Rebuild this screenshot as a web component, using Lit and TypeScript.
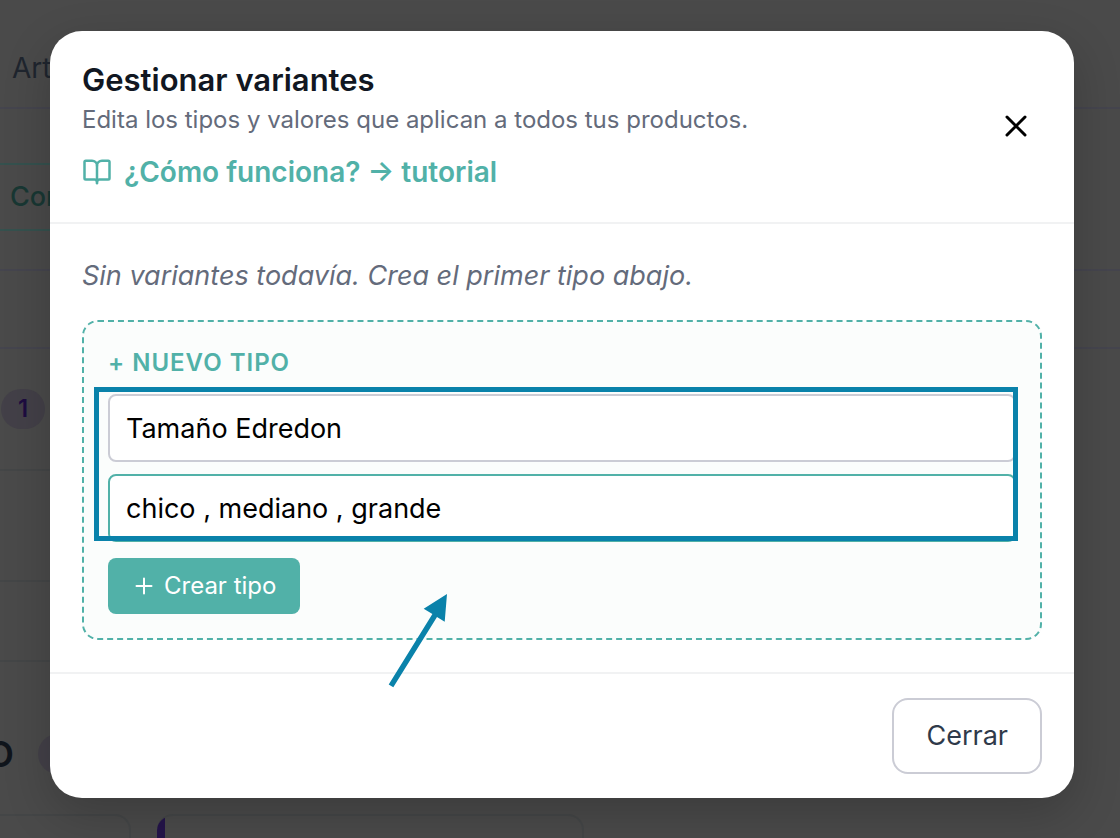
import { LitElement, html, css } from "lit";
import { customElement, state } from "lit/decorators.js";

@customElement("catalog-backdrop")
class CatalogBackdrop extends LitElement {
  static styles = css`
    :host {
      display: block;
      height: 100vh;
      overflow: hidden;
      background: #4a4a4a;
      color: #1f252e;
      font-family: Inter, "Liberation Sans", sans-serif;
      white-space: nowrap;
    }
    * { box-sizing: border-box; }
    .bar {
      height: 109px;
      padding: 48px 12px 0;
      border-bottom: 2px solid #45454e;
      font-size: 28px;
      line-height: 40px;
    }
    .filters {
      height: 162px;
      padding-top: 54px;
      border-bottom: 2px solid #45454e;
    }
    .filter {
      width: 240px;
      height: 68px;
      padding: 12px 10px;
      border: 2px solid #35514e;
      border-left: 0;
      color: #183733;
      font-size: 27px;
      font-weight: 500;
      line-height: 40px;
    }
    .head { height: 78px; border-bottom: 2px solid #45454e; }
    .row {
      width: 960px;
      height: 111px;
      border-bottom: 2px solid #444647;
    }
    .row.first { height: 122px; padding: 40px 1px; }
    .row.last { height: 80px; }
    .pill {
      display: block;
      width: 44px;
      height: 40px;
      border-radius: 20px;
      background: #434048;
      color: #1d0c40;
      font-size: 24px;
      font-weight: 600;
      line-height: 40px;
      text-align: center;
    }
    .section {
      display: flex;
      align-items: center;
      gap: 24px;
      height: 152px;
      padding-top: 32px;
    }
    .section h2 {
      display: flex;
      justify-content: flex-end;
      width: 14px;
      margin: 0;
      overflow: hidden;
      color: #10151c;
      font-size: 36px;
      font-weight: 600;
    }
    .cards { display: flex; gap: 26px; }
    .card {
      flex: none;
      width: 427px;
      height: 120px;
      border: 2px solid #444647;
      border-radius: 16px;
      overflow: hidden;
    }
    .card.start { width: 131px; border-left: 0; border-top-left-radius: 0; }
    .card.accent {
      border-left: 0;
      background: linear-gradient(to right, #24144a 8px, transparent 8px);
    }
  `;

  render() {
    return html`
      <div class="bar">Artículos</div>
      <div class="filters"><div class="filter">Con variantes</div></div>
      <div class="head"></div>
      <div class="row first"><span class="pill">1</span></div>
      <div class="row"></div>
      <div class="row last"></div>
      <div class="section"><h2>O</h2><span class="pill"></span></div>
      <div class="cards">
        <div class="card start"></div>
        <div class="card accent"></div>
      </div>
    `;
  }
}

@customElement("variants-dialog")
class VariantsDialog extends LitElement {
  @state() private typeName = "Tamaño Edredon";
  @state() private values = "chico , mediano , grande";

  static styles = css`
    :host {
      display: block;
      font-family: Inter, "Liberation Sans", sans-serif;
      font-size: 27px;
      line-height: 40px;
    }
    * { box-sizing: border-box; }
    button, input { font: inherit; }
    button { cursor: pointer; }
    svg { flex: none; fill: none; stroke: currentColor; stroke-linecap: round; stroke-linejoin: round; }
    .dialog {
      border-radius: 32px;
      background: #fff;
      box-shadow: 0 16px 48px rgba(0, 0, 0, 0.2);
    }
    .header {
      display: flex;
      align-items: center;
      justify-content: space-between;
      padding: 29px 32px 30px;
      border-bottom: 2px solid #f1f2f3;
    }
    h1 {
      margin: 0;
      color: #111722;
      font-size: 31px;
      font-weight: 600;
      line-height: 40px;
    }
    .subtitle { margin: 0; color: #646b7b; font-size: 24px; }
    .help {
      display: flex;
      align-items: center;
      gap: 12px;
      margin-top: 12px;
      color: #51b1a8;
      font-size: 28px;
      font-weight: 600;
      text-decoration: none;
    }
    .close {
      display: flex;
      padding: 8px;
      border: 0;
      background: none;
      color: #000;
    }
    .body { padding: 32px; }
    .empty { margin: 0 0 24px; color: #646b7b; font-style: italic; }
    .new-type {
      padding: 24px;
      border: 2px dashed #51b1a8;
      border-radius: 16px;
      background: #fbfdfc;
    }
    h2 {
      margin: 0 0 14px;
      color: #51b1a8;
      font-size: 24px;
      font-weight: 600;
      line-height: 34px;
      letter-spacing: 1px;
    }
    .fields {
      position: relative;
      display: grid;
      gap: 12px;
      margin-bottom: 16px;
    }
    .field {
      width: 100%;
      height: 68px;
      padding: 0 16px;
      border: 2px solid #cbccd5;
      border-radius: 8px;
      outline: 0;
      background: #fff;
      color: #000;
    }
    .field.active { border-color: #51b1a8; }
    .marker {
      position: absolute;
      inset: -7px -2px 1px -14px;
      border: 5px solid #0a82aa;
      pointer-events: none;
    }
    .arrow {
      position: absolute;
      left: 280px;
      top: 198px;
      fill: #0a82aa;
      stroke: none;
      pointer-events: none;
    }
    .create {
      display: flex;
      align-items: center;
      gap: 8px;
      height: 56px;
      padding: 0 24px;
      border: 0;
      border-radius: 8px;
      background: #51b1a8;
      color: #fff;
      font-size: 24px;
    }
    .footer {
      display: flex;
      justify-content: flex-end;
      padding: 24px 32px;
      border-top: 2px solid #f1f2f3;
    }
    .cancel {
      height: 76px;
      padding: 0 32px;
      border: 2px solid #cbccd5;
      border-radius: 16px;
      background: #fff;
      color: #2f3a4a;
    }
  `;

  render() {
    return html`
      <div class="dialog" role="dialog" aria-labelledby="title">
        <div class="header">
          <div>
            <h1 id="title">Gestionar variantes</h1>
            <p class="subtitle">Edita los tipos y valores que aplican a todos tus productos.</p>
            <a class="help" href="#tutorial">
              <svg width="30" height="30" viewBox="0 0 24 24" stroke-width="2">
                <path d="M12 7v14" />
                <path d="M3 18a1 1 0 0 1-1-1V4a1 1 0 0 1 1-1h5a4 4 0 0 1 4 4 4 4 0 0 1 4-4h5a1 1 0 0 1 1 1v13a1 1 0 0 1-1 1h-7a2 2 0 0 0-2 2 2 2 0 0 0-2-2z" />
              </svg>
              <span>¿Cómo funciona? → tutorial</span>
            </a>
          </div>
          <button class="close" type="button" aria-label="Cerrar">
            <svg width="36" height="36" viewBox="0 0 24 24" stroke-width="2">
              <path d="M18 6 6 18M6 6l12 12" />
            </svg>
          </button>
        </div>
        <div class="body">
          <p class="empty">Sin variantes todavía. Crea el primer tipo abajo.</p>
          <div class="new-type">
            <h2>+ NUEVO TIPO</h2>
            <div class="fields">
              <input class="field" type="text" aria-label="Nombre del tipo" .value=${this.typeName}
                @input=${(e: InputEvent) => (this.typeName = (e.target as HTMLInputElement).value)} />
              <input class="field active" type="text" aria-label="Valores" .value=${this.values}
                @input=${(e: InputEvent) => (this.values = (e.target as HTMLInputElement).value)} />
              <div class="marker"></div>
              <svg class="arrow" width="64" height="100" viewBox="388 592 64 100">
                <path d="M447 594 444.700 621.700 437 617 393.300 687.300 388.700 684.500 432.400 614 423.700 608.700z" />
              </svg>
            </div>
            <button class="create" type="button">
              <svg width="24" height="24" viewBox="0 0 24 24" stroke-width="2">
                <path d="M12 4.500v15M4.500 12h15" />
              </svg>
              Crear tipo
            </button>
          </div>
        </div>
        <div class="footer"><button class="cancel" type="button">Cerrar</button></div>
      </div>
    `;
  }
}

@customElement("app-root")
class AppRoot extends LitElement {
  static styles = css`
    :host { display: grid; }
    catalog-backdrop, .overlay { grid-area: 1 / 1; min-width: 0; }
    .overlay { z-index: 1; padding: 31px 46px 40px 50px; }
  `;

  render() {
    return html`
      <catalog-backdrop aria-hidden="true"></catalog-backdrop>
      <div class="overlay"><variants-dialog></variants-dialog></div>
    `;
  }
}
